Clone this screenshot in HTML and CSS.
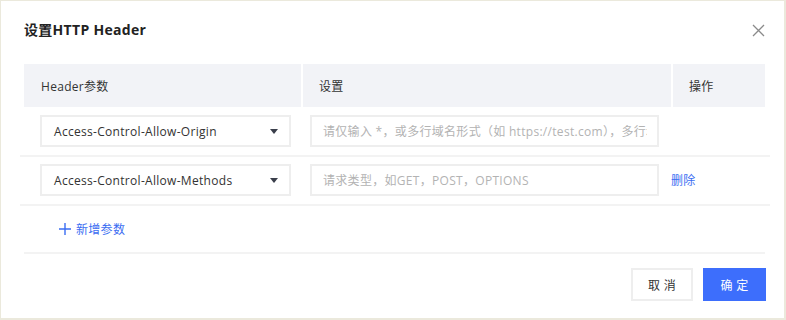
FILE: index.html
```html
<!DOCTYPE html>
<html lang="zh-CN">
<head>
  <meta charset="UTF-8">
  <title>设置HTTP Header</title>
  <link rel="stylesheet" href="styles.css">
</head>
<body>
  <div class="dialog">
    <div class="dialog-head">
      <h3 class="dialog-title">设置HTTP Header</h3>
      <button class="close-btn" aria-label="关闭">
        <svg width="13" height="13" viewBox="0 0 13 13"><path d="M1 1L12 12M12 1L1 12" stroke="#8a8a8a" stroke-width="1.3" fill="none"/></svg>
      </button>
    </div>

    <div class="table">
      <div class="table-head">
        <div class="th th-key">Header参数</div>
        <div class="th th-value">设置</div>
        <div class="th th-op">操作</div>
      </div>

      <div class="row">
        <div class="select">
          <span>Access-Control-Allow-Origin</span>
          <i class="caret"></i>
        </div>
        <div class="input">
          <input type="text" placeholder="请仅输入 *，或多行域名形式（如 https://test.com），多行域名以换行分隔">
        </div>
        <div class="op"></div>
      </div>

      <div class="row">
        <div class="select">
          <span>Access-Control-Allow-Methods</span>
          <i class="caret"></i>
        </div>
        <div class="input">
          <input type="text" placeholder="请求类型，如GET，POST，OPTIONS">
        </div>
        <div class="op"><a href="#" class="link">删除</a></div>
      </div>

      <div class="add-row">
        <a href="#" class="link add-link">
          <svg width="12" height="12" viewBox="0 0 12 12"><path d="M6 0V12M0 6H12" stroke="#3b6df2" stroke-width="1.4" fill="none"/></svg>
          新增参数
        </a>
      </div>
    </div>

    <div class="dialog-foot">
      <button class="btn">取 消</button>
      <button class="btn btn-primary">确 定</button>
    </div>
  </div>
</body>
</html>
```

FILE: styles.css
```css
body {
  margin: 0;
  padding: 0;
  background-color: #fff;
  font-family: "Open Sans", "Noto Sans CJK SC", sans-serif;
  font-size: 12px;
  letter-spacing: 0.3px;
  color: #333;
}

.dialog {
  width: 786px;
  height: 320px;
  box-sizing: border-box;
  border: 1px solid #ebe9dc;
  border-right-width: 2px;
  border-bottom-width: 2px;
  background-color: #fff;
}

.dialog-head {
  display: flex;
  align-items: center;
  justify-content: space-between;
  padding: 18px 19px 0 23px;
  height: 22px;
}

.dialog-title {
  margin: 0;
  font-size: 14px;
  font-weight: bold;
  color: #222;
  line-height: 20px;
}

.close-btn {
  border: none;
  background: none;
  padding: 0;
  width: 13px;
  height: 13px;
  cursor: pointer;
  display: flex;
}

.table {
  margin: 23px 14px 0 19px;
}

.table-head {
  display: flex;
  gap: 2px;
  height: 43px;
  margin: 0 5px 0 4px;
}

.th {
  display: flex;
  align-items: center;
  padding-left: 17px;
  background-color: #f2f3f7;
  color: #333;
}

.th-key {
  width: 260px;
}

.th-value {
  width: 352px;
  padding-left: 16px;
}

.th-op {
  flex: 1;
  padding-left: 16px;
}

.row {
  display: flex;
  align-items: center;
  padding: 8px 0 8px 20px;
  border-bottom: 2px solid #f3f3f3;
}

.row + .row {
  padding-top: 7px;
}

.select,
.input {
  box-sizing: border-box;
  height: 32px;
  border: 2px solid #eeeeee;
  background-color: #fff;
}

.select {
  width: 251px;
  display: flex;
  align-items: center;
  justify-content: space-between;
  padding: 0 11px 0 12px;
  color: #333;
}

.caret {
  width: 0;
  height: 0;
  border-left: 4px solid transparent;
  border-right: 4px solid transparent;
  border-top: 5px solid #3a3f4b;
}

.input {
  width: 349px;
  margin-left: 19px;
  display: flex;
  align-items: center;
}

.input input {
  width: 100%;
  border: none;
  outline: none;
  padding: 0 10px 0 11px;
  font-family: inherit;
  font-size: 12px;
  letter-spacing: inherit;
  color: #333;
  background: transparent;
}

.input input::placeholder {
  color: #b3b3b3;
}

.op {
  padding-left: 12px;
}

.link {
  color: #3b6df2;
  text-decoration: none;
}

.add-row {
  display: flex;
  align-items: center;
  height: 46px;
  margin: 0 5px 0 4px;
  padding-left: 35px;
  border-bottom: 2px solid #f3f3f3;
}

.add-link {
  display: flex;
  align-items: center;
  gap: 5px;
}

.dialog-foot {
  display: flex;
  justify-content: flex-end;
  gap: 10px;
  padding: 14px 18px 0 0;
}

.btn {
  height: 33px;
  min-width: 61px;
  padding: 0 15px;
  border: 2px solid #eeeeee;
  background-color: #fff;
  font-family: inherit;
  font-size: 12px;
  letter-spacing: inherit;
  color: #333;
  cursor: pointer;
}

.btn-primary {
  min-width: 63px;
  border-color: #3d6efc;
  background-color: #3d6efc;
  color: #fff;
}
```
